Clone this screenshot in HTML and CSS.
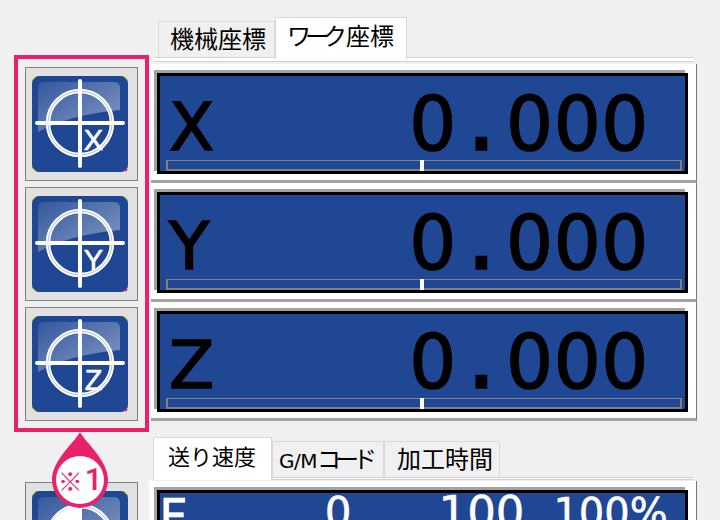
FILE: index.html
```html
<!DOCTYPE html>
<html lang="ja">
<head>
  <meta charset="UTF-8" />
  <title>座標表示</title>
  <link rel="stylesheet" href="styles.css">
</head>
<body>

<svg class="defs" width="0" height="0">
  <defs>
    <linearGradient id="gloss" x1="0" y1="0" x2="1" y2="1">
      <stop offset="0" stop-color="#fff" stop-opacity="0.1"/>
      <stop offset="1" stop-color="#fff" stop-opacity="0.45"/>
    </linearGradient>
    <symbol id="target" viewBox="0 0 96 96">
      <rect width="96" height="96" rx="7" fill="#1f4793"/>
      <path d="M1 3L3 1M93 1L95 3M1 93L3 95" stroke="#dce600" stroke-width="1.5"/>
      <path d="M93 95L95 93" stroke="#e8216a" stroke-width="2"/>
      <path d="M6 12Q6 6 12 6H82Q88 6 88 12V34Q40 38 6 56Z" fill="url(#gloss)"/>
      <circle cx="48" cy="47" r="32" fill="none" stroke="#fff" stroke-width="4.5"/>
      <circle cx="48" cy="47" r="32" fill="none" stroke="#8ea4cc" stroke-width="0.7"/>
      <path d="M48 5V90M5 47H91" stroke="#fff" stroke-width="4" stroke-linecap="round"/>
    </symbol>
  </defs>
</svg>

<div class="page">
  <!-- Left: zero buttons -->
  <div class="side">
    <div class="marked">
      <button class="zero">
        <svg class="icon" viewBox="0 0 96 96"><use href="#target"/><text x="61.5" y="74">X</text></svg>
      </button>
      <button class="zero">
        <svg class="icon" viewBox="0 0 96 96"><use href="#target"/><text x="61.5" y="74">Y</text></svg>
      </button>
      <button class="zero">
        <svg class="icon" viewBox="0 0 96 96"><use href="#target"/><text x="61.5" y="74">Z</text></svg>
      </button>
    </div>
    <button class="zero zero-low">
      <svg class="icon" viewBox="0 0 96 96">
        <use href="#target"/>
        <path d="M48 15A32 32 0 0 0 48 79Z" fill="#fff"/>
      </svg>
    </button>
    <div class="callout">
      <svg viewBox="0 0 60 76" width="60" height="76">
        <path d="M30 0C35 10 58 28 58 48A28 28 0 1 1 2 48C2 28 25 10 30 0Z" fill="#e8216a"/>
        <circle cx="30" cy="48" r="24" fill="#fff"/>
      </svg>
      <span class="callout-text"><span class="mark">※</span>1</span>
    </div>
  </div>

  <!-- Right: readouts -->
  <div class="main">
    <div class="tabs">
      <div class="tab">機械座標</div>
      <div class="tab tab-on"><span class="kana">ワーク</span>座標</div>
    </div>
    <div class="tab-line"></div>

    <div class="readout">
      <div class="screen">
        <div class="values">
          <span class="axis">X</span>
          <span class="num">0<i>.</i>000</span>
        </div>
        <div class="track"><b></b></div>
      </div>
    </div>
    <div class="readout">
      <div class="screen">
        <div class="values">
          <span class="axis">Y</span>
          <span class="num">0<i>.</i>000</span>
        </div>
        <div class="track"><b></b></div>
      </div>
    </div>
    <div class="readout">
      <div class="screen">
        <div class="values">
          <span class="axis">Z</span>
          <span class="num">0<i>.</i>000</span>
        </div>
        <div class="track"><b></b></div>
      </div>
    </div>

    <div class="tabs tabs-low">
      <div class="tab tab-on tab-feed">送り速度</div>
      <div class="tab tab-gm"><span class="latin">G/M</span><span class="kana">コード</span></div>
      <div class="tab tab-time">加工時間</div>
    </div>
    <div class="tab-line tab-line-low"></div>

    <div class="readout readout-low">
      <div class="screen feed">
        <span class="feed-f">F</span>
        <span class="feed-a">0</span>
        <span class="feed-b">100</span>
        <span class="feed-c">100%</span>
      </div>
    </div>
  </div>
</div>
</body>
</html>
```

FILE: styles.css
```css
html, body {
  margin: 0;
  height: 100%;
  overflow: hidden;
}

body {
  background: #f0f0f0;
  font-family: "Noto Sans CJK JP", sans-serif;
  color: #000;
}

.defs {
  position: absolute;
}

.page {
  display: flex;
  height: 520px;
  overflow: hidden;
}

/* Left column */
.side {
  position: relative;
  width: 151px;
  padding: 55px 0 0 14px;
  box-sizing: border-box;
  flex: none;
}

.marked {
  width: 135px;
  box-sizing: border-box;
  border: 4px solid #e8216a;
  padding: 8px 7px 7px;
  display: flex;
  flex-direction: column;
  gap: 6px;
}

.zero {
  display: flex;
  width: 113px;
  height: 114px;
  box-sizing: border-box;
  padding: 8px 6px;
  background: #e1e1e1;
  border: 1px solid #808080;
}

.zero-low {
  margin: 50px 0 0 11px;
}

.icon {
  display: block;
  width: 96px;
  height: 96px;
}

.icon text {
  font-family: "Liberation Sans", sans-serif;
  font-size: 29px;
  fill: #fff;
  stroke: #fff;
  stroke-width: 0.6;
  text-anchor: middle;
}

.callout {
  position: absolute;
  left: 50px;
  top: 432px;
  width: 60px;
  height: 76px;
}

.callout svg {
  display: block;
}

.callout-text {
  position: absolute;
  left: 0;
  top: 28px;
  width: 60px;
  display: flex;
  justify-content: center;
  align-items: center;
  font-family: "Roboto", sans-serif;
  font-size: 31px;
  line-height: 40px;
  font-weight: 500;
  color: #e8216a;
}

.mark {
  font-family: "Noto Sans CJK JP", sans-serif;
  font-size: 25px;
  font-weight: 500;
  margin-right: 2px;
}

/* Right column */
.main {
  flex: 1;
  padding: 17px 23px 0 0;
  min-width: 0;
}

.tabs {
  display: flex;
  align-items: flex-end;
  height: 40px;
  padding-left: 7px;
}

.tab {
  height: 36px;
  padding: 0 8px 0 11px;
  box-sizing: border-box;
  background: #f0f0f0;
  border: 1px solid #d9d9d9;
  border-bottom: none;
  font-size: 24px;
  line-height: 31px;
  white-space: nowrap;
}

.tab-on {
  position: relative;
  z-index: 1;
  height: 42px;
  margin-bottom: -2px;
  padding: 0 12px 0 11px;
  background: #fff;
  line-height: 34px;
}

.kana {
  letter-spacing: -6px;
  margin-right: 5px;
}

.tab-line {
  height: 5px;
  margin: 0 4px 2px;
  background: #fff;
  border-top: 1px solid #d0d0d0;
  border-bottom: 1px solid #d0d0d0;
  box-sizing: border-box;
}

.tab-line-low {
  height: 3px;
  margin-bottom: 1px;
  margin-left: 2px;
}

/* Readout panels: white bevel, grey inner edge, black frame */
.readout {
  box-sizing: border-box;
  height: 119px;
  padding: 9px 8px 6px 6px;
  background: #fff;
  border-bottom: 3px solid #a3a3a3;
  border-right: 1px solid #777;
}

.screen {
  box-sizing: border-box;
  height: 101px;
  border: 3px solid #000;
  box-shadow: -3px -3px 0 #a3a3a3;
  background: #1f4793;
  padding: 0 3px 0 6px;
}

.values {
  display: flex;
  align-items: baseline;
  justify-content: space-between;
  box-sizing: border-box;
  height: 84px;
  padding: 0 33px 0 3px;
}

.axis {
  font-family: "DejaVu Sans", sans-serif;
  font-size: 66px;
  line-height: 79px;
  -webkit-text-stroke: 1.5px #000;
}

.num {
  font-family: "DejaVu Sans", sans-serif;
  font-size: 74px;
  line-height: 79px;
  letter-spacing: 0.6px;
  -webkit-text-stroke: 1.5px #000;
}

.num i {
  display: inline-block;
  width: 49px;
  text-align: center;
  font-style: normal;
  font-size: 100px;
  letter-spacing: 0;
}

.track {
  position: relative;
  height: 11px;
  box-sizing: border-box;
  border: solid #808080;
  border-width: 1px 2px 2px;
}

.track b {
  position: absolute;
  left: 252px;
  top: -1px;
  bottom: -2px;
  width: 4px;
  background: #fff;
}

/* Lower tabs */
.tabs-low {
  margin-top: 16px;
  padding-left: 2px;
}

.tab-feed {
  height: 43px;
  margin-bottom: -3px;
  padding: 0 15px 0 14px;
  font-size: 22px;
}

.tab-gm {
  padding: 0 7px 0 6px;
}

.latin {
  font-family: "DejaVu Sans", sans-serif;
  font-size: 20px;
  letter-spacing: -0.5px;
}

.tab-time {
  padding: 0 6px 0 12px;
}

.readout-low {
  margin-left: -2px;
  padding: 9px 8px 6px 8px;
}

.feed {
  display: flex;
  align-items: flex-start;
  color: #fff;
  font-family: "DejaVu Sans", sans-serif;
  font-size: 42px;
  line-height: 40px;
  padding: 0;
  overflow: hidden;
  -webkit-text-stroke: 0.5px #fff;
}

.feed-f {
  margin: 4px 0 0 -1px;
  font-size: 50px;
}

.feed-a {
  margin-left: 137px;
}

.feed-b {
  margin-left: 87px;
  font-size: 45px;
}

.feed-c {
  margin-left: 29px;
  font-size: 40px;
}
```
